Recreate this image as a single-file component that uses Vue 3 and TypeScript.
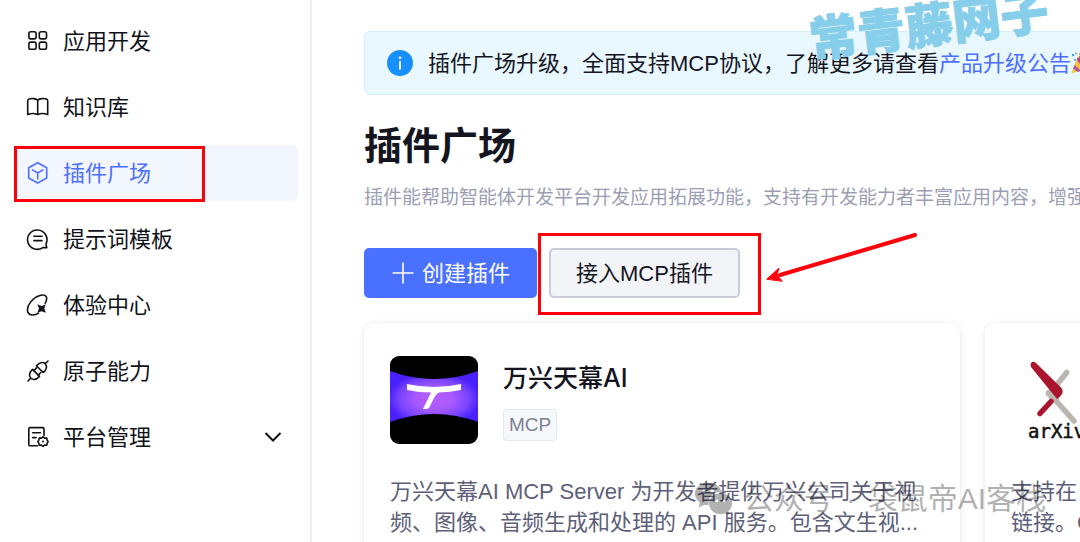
<script setup lang="ts">
interface NavItem {
  label: string
  icon: string
  active?: boolean
}

const navItems: NavItem[] = [
  { label: '应用开发', icon: 'apps' },
  { label: '知识库', icon: 'book' },
  { label: '插件广场', icon: 'cube', active: true },
  { label: '提示词模板', icon: 'chat' },
  { label: '体验中心', icon: 'orbit' },
  { label: '原子能力', icon: 'plug' },
]
</script>

<template>
  <div class="page">
    <nav class="sidebar" aria-label="主导航">
      <a
        v-for="item in navItems"
        :key="item.label"
        href="#"
        class="nav-item"
        :class="{ active: item.active }"
      >
        <svg class="nav-icon" viewBox="0 0 24 24" aria-hidden="true">
          <g v-if="item.icon === 'apps'">
            <rect x="2.9" y="2.7" width="7.2" height="7.2" rx="1.8" />
            <rect x="13.3" y="2.7" width="7.2" height="7.2" rx="1.8" />
            <rect x="2.9" y="13.1" width="7.2" height="7.2" rx="1.8" />
            <rect x="13.3" y="13.1" width="7.2" height="7.2" rx="1.8" />
          </g>
          <g v-else-if="item.icon === 'book'">
            <path d="M11.7 5.2C9.6 3.3 5.4 3.2 3 4.1Q1.7 4.6 1.7 5.8V19.6C4.6 18.5 9 18.3 11.7 19.6C14.4 18.3 18.8 18.5 21.7 19.6V5.8Q21.7 4.6 20.4 4.1C18 3.2 13.8 3.3 11.7 5.2V19.4" />
          </g>
          <g v-else-if="item.icon === 'cube'">
            <path d="M11.7 1.8L20.7 6.7V17L11.7 22L2.7 17V6.7Z" />
            <path d="M6.4 8.9L11.7 12L17 8.9M11.7 12V18" />
          </g>
          <g v-else-if="item.icon === 'chat'">
            <path d="M20.8 20.6H16.8A9.7 9.700 0 1 1 20.2 16.4Q20 18.600 20.8 20.600Z" />
            <path d="M7.8 9.2H16M7.8 13.6H16" />
          </g>
          <g v-else-if="item.icon === 'orbit'">
            <path d="M12.5 20.2C9 22.6 3.2 23 1.8 19C-.1 13.2 6.7 4.1 14.8 2.2C20.8.9 22 5.4 19.2 10.2" />
            <path class="solid" d="M11.4 11.2L15.6 13L19.8 11.2L18.3 15.5L19.8 19.8L15.6 18.3L11.4 19.8L13 15.5Z" />
          </g>
          <g v-else>
            <path d="M2 22L4.6 19.3M19.2 4.7L22 2" />
            <path d="M6.6 10.4L13.5 17.4C10.7 20.4 7.2 21.3 4.7 19C2.4 16.6 3.5 13 6.6 10.4Z" />
            <path d="M10.4 6.8L17.2 13.5C20.4 11 21.6 7.2 19.2 4.7C16.8 2.4 13 3.6 10.4 6.8Z" />
            <path d="M7.8 11.7L10.5 8.9M12.3 16.1L15 13.3" />
          </g>
        </svg>
        <span class="label">{{ item.label }}</span>
        <span v-if="item.active" class="marker nav-marker"></span>
      </a>
      <button type="button" class="nav-item" aria-expanded="false">
        <svg class="nav-icon" viewBox="0 0 24 24" aria-hidden="true">
          <path d="M11.5 20.8H4.2Q2.8 20.8 2.8 19.4V4Q2.8 2.6 4.2 2.6H16.6Q18 2.6 18 4V10.6M6.6 7.7H14.3M6.6 12.6H10" />
          <path d="M17 11.8L18.6 13.1H20.8L21.1 15.1L22.2 16.6L21.1 18.2L20.8 20.1H18.6L17 21.5L15.4 20.1H13.2L12.9 18.2L11.8 16.6L12.9 15.1L13.2 13.1H15.4Z" />
          <circle class="solid" cx="17" cy="16.6" r="1" />
        </svg>
        <span class="label">平台管理</span>
        <svg class="chevron" viewBox="0 0 18 18" aria-hidden="true">
          <path d="M1.5 5L9 12.5L16.5 5" />
        </svg>
      </button>
    </nav>

    <main class="content">
      <div class="notice">
        <svg class="info" viewBox="0 0 26 26" aria-hidden="true">
          <circle cx="13" cy="13" r="13" fill="#1890ff" />
          <circle cx="13" cy="7.8" r="1.4" fill="#e8f6ff" />
          <rect x="12" y="11" width="2" height="8.6" fill="#e8f6ff" />
        </svg>
        <span class="label">插件广场升级，全面支持MCP协议，了解更多请查看<a href="#">产品升级公告</a></span>
        <svg class="party" viewBox="0 0 22 22" aria-hidden="true">
          <path d="M.5 21.5L6 6Q13 9 16 16Z" fill="#f6c343" />
          <path d="M3.6 13L10 19L6.8 20L2.2 16.5Z" fill="#b2559b" />
          <path d="M6 6Q9 4 13.5 9Q18 14 16 16Q12 16 9 12Q5.500 8 6 6Z" fill="#a34f86" />
          <path d="M8 5Q11 5 9 1M13 9Q14 4 18 4" fill="none" stroke="#e8554d" stroke-width="2" />
          <circle cx="2" cy="3" r="1.2" fill="#3f9bea" />
          <circle cx="4" cy="8" r="1" fill="#3f9bea" />
          <circle cx="5" cy="1.500" r="1" fill="#6bb36d" />
        </svg>
      </div>

      <h1>插件广场</h1>
      <p class="intro">插件能帮助智能体开发平台开发应用拓展功能，支持有开发能力者丰富应用内容，增强</p>

      <div class="actions">
        <button type="button" class="btn primary">
          <svg viewBox="0 0 22 22" aria-hidden="true">
            <path d="M11 0.500V21.500M0.500 11H21.500" />
          </svg>
          <span class="label">创建插件</span>
        </button>
        <button type="button" class="btn secondary">
          <span class="label">接入MCP插件</span>
          <span class="marker btn-marker"></span>
          <svg class="arrow" viewBox="0 0 154 54" aria-hidden="true">
            <path d="M149 5L14 45" />
            <polygon points="1,49 13,38 11,45 16,51" />
          </svg>
        </button>
      </div>

      <section class="cards">
        <article class="card">
          <header class="card-head">
            <svg class="logo" viewBox="0 0 88 88" aria-hidden="true">
              <defs>
                <radialGradient id="band" cx="50%" cy="55%" r="52%">
                  <stop offset="0" stop-color="#b75cff" />
                  <stop offset="0.400" stop-color="#a95aff" />
                  <stop offset="0.750" stop-color="#7a45ff" />
                  <stop offset="1" stop-color="#4a20ff" />
                </radialGradient>
              </defs>
              <rect width="88" height="88" rx="9" fill="#000" />
              <path d="M0 15Q44 31 88 15V66Q44 50 0 66Z" fill="url(#band)" />
              <path d="M17 28Q44 34 71 28V34Q60 36 49 36.500Q46 38 44.500 41L39 52L37 53H33L41 36.500Q29 36.500 17 34Z" fill="#fff" />
            </svg>
            <div>
              <h2>万兴天幕AI</h2>
              <span class="tag">MCP</span>
            </div>
          </header>
          <p>万兴天幕AI MCP Server 为开发者提供万兴公司关于视频、图像、音频生成和处理的 API 服务。包含文生视...</p>
        </article>

        <article class="card">
          <header class="card-head">
            <svg class="logo" viewBox="0 0 88 88" aria-hidden="true">
              <path d="M55.700 16.500L44 31M39 38L63 65" fill="none" stroke="#bab5af" stroke-width="5.500" stroke-linecap="round" />
              <path d="M40 33Q33 34 35 39L39 43L48 44L50 36Z" fill="#bab5af" />
              <path d="M29 57.500L40 45.500" fill="none" stroke="#aa142d" stroke-width="5.500" stroke-linecap="round" />
              <path d="M20 7Q22 4.500 25 7L50.500 32Q53 36 50 39.500L46 43L20 11Q19 9 20 7Z" fill="#aa142d" />
              <text x="17" y="82">arXiv</text>
            </svg>
          </header>
          <p>支持在<br />链接。C</p>
        </article>
      </section>
    </main>

    <div class="stamp">常青藤网子</div>
    <div class="account">
      <svg viewBox="0 0 40 36" aria-hidden="true">
        <path d="M15 1C6.500 1 1 6.500 1 12.500C1 16.500 3.500 19.500 6 21.500L5 27L11 24Q13 24.600 15.500 24.500C14.500 16 21 10.500 29 10.500C27.500 4.500 22 1 15 1Z" />
        <path d="M28 12C21 12 16 17 16 23C16 29 21 34 28 34Q30.500 34 32.500 33L37 35L36 31C38.500 29 40 26 40 23C40 17 35 12 28 12Z" />
        <g class="eyes">
          <circle cx="10.500" cy="9.500" r="1.800" />
          <circle cx="19" cy="9.500" r="1.800" />
          <circle cx="24" cy="20" r="1.500" />
          <circle cx="32" cy="20" r="1.500" />
        </g>
      </svg>
      <span>公众号</span>
      <span>·</span>
      <span>袋鼠帝AI客栈</span>
    </div>
  </div>
</template>

<style>
body {
  margin: 0;
  background: #fff;
}
</style>

<style scoped>
.page {
  position: relative;
  display: flex;
  height: 100vh;
  overflow: hidden;
  font-family: "Liberation Sans", "Noto Sans CJK SC", sans-serif;
  font-size: 22px;
  color: #14151f;
  background: #fff;
}

.page * {
  box-sizing: border-box;
}

.sidebar {
  display: flex;
  flex: none;
  flex-direction: column;
  gap: 10px;
  width: 312px;
  padding: 13px 12px 0 14px;
  border-right: 2px solid #f0f0f2;
}

.nav-item {
  position: relative;
  display: flex;
  align-items: center;
  gap: 13px;
  height: 56px;
  padding: 0 16px 0 12px;
  border: 0;
  border-radius: 6px;
  background: none;
  font: inherit;
  color: #111218;
  text-align: left;
  text-decoration: none;
}

.nav-item.active {
  color: #4d6fff;
  background: #f1f6ff;
}

.nav-icon {
  width: 24px;
  height: 24px;
  fill: none;
  stroke: currentColor;
  stroke-width: 1.6;
  stroke-linejoin: round;
  stroke-linecap: round;
}

.label {
  padding-bottom: 5px;
}

.solid {
  fill: currentColor;
  stroke: none;
}

.chevron {
  width: 18px;
  height: 18px;
  margin-left: auto;
  fill: none;
  stroke: currentColor;
  stroke-width: 2;
}

.marker {
  position: absolute;
  border: 3px solid #fe0009;
  pointer-events: none;
}

.nav-marker {
  top: 1px;
  bottom: -1px;
  left: 0;
  width: 191px;
}

.content {
  flex: 1;
  min-width: 0;
  padding: 31px 0 0 52px;
}

.notice {
  display: flex;
  align-items: center;
  width: max-content;
  min-width: 100%;
  height: 64px;
  padding: 0 22px;
  border: 1px solid #d3effd;
  border-radius: 6px;
  background: #e9f7fe;
  white-space: nowrap;
}

.notice a {
  color: #4d6fff;
  text-decoration: none;
}

.info {
  width: 26px;
  height: 26px;
  margin-right: 15px;
}

.party {
  width: 22px;
  height: 22px;
}

h1 {
  margin: 23px 0 0;
  font-size: 38px;
  font-weight: 700;
  line-height: 56px;
}

.intro {
  margin: 10px 0 0;
  font-size: 19px;
  line-height: 28px;
  color: #9b9eb3;
  white-space: nowrap;
}

.actions {
  display: flex;
  gap: 12px;
  margin-top: 36px;
}

.btn {
  position: relative;
  display: flex;
  align-items: center;
  gap: 8px;
  height: 50px;
  border-radius: 5px;
  font: inherit;
  white-space: nowrap;
}

.primary {
  padding: 0 27px 0 28px;
  border: 0;
  color: #fff;
  background: #4a70ff;
}

.primary svg {
  width: 22px;
  height: 22px;
  fill: none;
  stroke: #fff;
  stroke-width: 1.6;
}

.secondary {
  padding: 0 25px;
  border: 2px solid #c8ccd7;
  color: #14151f;
  background: #f3f4f7;
}

.btn-marker {
  top: -17px;
  right: -23px;
  bottom: -19px;
  left: -13px;
}

.arrow {
  position: absolute;
  top: -20px;
  left: calc(100% + 28px);
  width: 154px;
  height: 54px;
  fill: #fe0009;
  stroke: #fe0009;
  stroke-width: 4;
  stroke-linecap: round;
}

.arrow polygon {
  stroke-width: 1;
}

.cards {
  display: grid;
  grid-template-columns: repeat(2, minmax(596px, 1fr));
  gap: 25px;
  margin-top: 25px;
}

.card {
  min-height: 260px;
  padding: 33px 26px;
  border-radius: 10px;
  background: #fff;
  box-shadow: 0 1px 6px rgba(0, 0, 0, 0.11);
}

.card-head {
  display: flex;
  gap: 25px;
}

.logo {
  width: 88px;
  height: 88px;
}

.logo text {
  font-family: "DejaVu Sans Mono", monospace;
  font-size: 19px;
  fill: #111;
  stroke: #111;
  stroke-width: 0.5;
}

h2 {
  margin: 4px 0 13px;
  font-family: Inter, "Noto Sans CJK SC", sans-serif;
  font-size: 25px;
  font-weight: 500;
  line-height: 36px;
}

.tag {
  display: block;
  width: max-content;
  padding: 0 5px;
  border: 1px solid #e6e8ee;
  border-radius: 4px;
  font-size: 19px;
  line-height: 30px;
  color: #7c8093;
  background: #f7f8fb;
}

.card p {
  margin: 32px 0 0;
  line-height: 31px;
  color: #5d6078;
}

.stamp {
  position: absolute;
  top: -5px;
  right: 31px;
  font-size: 48px;
  font-weight: 900;
  line-height: 64px;
  color: #87ceeb;
  -webkit-text-stroke: 1px #87ceeb;
  transform: rotate(-7deg);
}

.account {
  position: absolute;
  right: 34px;
  bottom: 23px;
  display: flex;
  align-items: center;
  gap: 12px;
  font-size: 30px;
  line-height: 40px;
  color: #000;
  opacity: 0.3;
}

.account svg {
  width: 38px;
  height: 36px;
  fill: #000;
}

.eyes {
  fill: #fff;
}
</style>
